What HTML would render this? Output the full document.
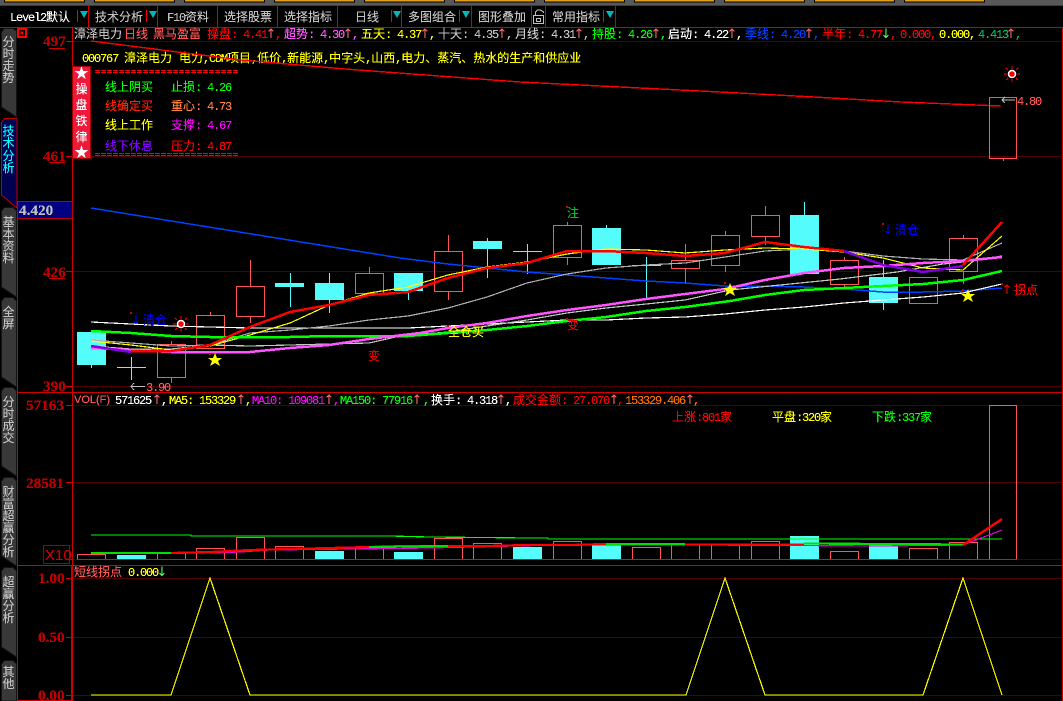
<!DOCTYPE html>
<html><head><meta charset="utf-8"><style>
html,body{margin:0;padding:0;background:#000;width:1063px;height:701px;overflow:hidden}
svg{display:block;position:absolute;left:0;top:0}
text{font-family:"WenQuanYi Zen Hei","Noto Sans CJK SC",sans-serif;font-size:12px;white-space:pre;filter:url(#sh)}
.n{font-family:"Liberation Mono",monospace;font-size:12px;letter-spacing:-1.2px}
.b{font-family:"Liberation Serif",serif;font-size:15.2px;font-weight:bold;fill:#c00000}
.a{font-family:"DejaVu Sans",sans-serif;font-size:13px;text-anchor:middle}
.t{fill:#c0c0c0;text-anchor:middle}
.l{fill:none;shape-rendering:crispEdges}
.c{fill:none;stroke:#ff5454;shape-rendering:crispEdges}
.f{fill:#54fcfc;shape-rendering:crispEdges}
.w{stroke:#54fcfc;shape-rendering:crispEdges}
.r{stroke:#ff5454;shape-rendering:crispEdges}
.g{stroke:#500000;shape-rendering:crispEdges}
.e{stroke:#d00000;shape-rendering:crispEdges;fill:none}
</style></head><body>
<svg width="1063" height="701" viewBox="0 0 1063 701" xmlns="http://www.w3.org/2000/svg">
<defs><filter id="sh" x="-20%" y="-30%" width="140%" height="160%" color-interpolation-filters="sRGB"><feComponentTransfer><feFuncA type="linear" slope="2.6" intercept="-0.35"/></feComponentTransfer></filter></defs>
<!-- top band -->
<rect x="0" y="0" width="1063" height="5" fill="#585858"/>
<g fill="#e0a010" stroke="#000" shape-rendering="crispEdges">
<rect x="4.5" y="-2" width="80" height="4"/><rect x="94.5" y="-2" width="80" height="4"/><rect x="184.5" y="-2" width="80" height="4"/><rect x="274.5" y="-2" width="80" height="4"/><rect x="364.5" y="-2" width="80" height="4"/><rect x="454.5" y="-2" width="80" height="4"/><rect x="544.5" y="-2" width="80" height="4"/><rect x="634.5" y="-2" width="80" height="4"/><rect x="724.5" y="-2" width="80" height="4"/><rect x="814.5" y="-2" width="80" height="4"/><rect x="904.5" y="-2" width="80" height="4"/></g>
<rect x="0" y="5" width="1063" height="22" fill="#000"/>
<path class="e" d="M0 5.5H1063M0 27.5H1063M88.5 6V27M157.5 6V27M217.5 6V27M277.5 6V27M337.5 6V27M401.5 6V27M471.5 6V27M531.5 6V27M545.5 6V27M615.5 6V27"/>
<path d="M77.5 10V22M146.5 10V22M391.5 10V22M459.5 10V22M603.5 10V22" stroke="#f00" shape-rendering="crispEdges"/>
<g fill="#00b8b8"><path d="M80 11H88L84 18Z"/><path d="M149 11H157L153 18Z"/><path d="M393 11H401L397 18Z"/><path d="M462 11H470L466 18Z"/><path d="M606 11H614L610 18Z"/></g>
<text x="10" y="21" fill="#fff"><tspan class="n">Level2</tspan>默认</text>
<text x="95" y="21" fill="#c0c0c0">技术分析</text>
<text x="167" y="21" fill="#c0c0c0"><tspan class="n">F10</tspan>资料</text>
<text x="224" y="21" fill="#c0c0c0">选择股票</text>
<text x="284" y="21" fill="#c0c0c0">选择指标</text>
<text x="355" y="21" fill="#c0c0c0">日线</text>
<text x="408" y="21" fill="#c0c0c0">多图组合</text>
<text x="478" y="21" fill="#c0c0c0">图形叠加</text>
<text x="552" y="21" fill="#c0c0c0">常用指标</text>
<g fill="none" stroke="#c0c0c0" shape-rendering="crispEdges"><rect x="533.5" y="15.5" width="10" height="8"/><path d="M535.5 15V12L537.5 10H540.5L543.5 12V13"/><rect x="536.5" y="18.5" width="4" height="3"/></g>

<!-- left tabs -->
<g fill="#383838" stroke="#141414" shape-rendering="crispEdges">
<path d="M1.5 32L4.5 28.5H13L16.5 31V117L1.5 107Z"/>
<path d="M1.5 211L4.5 207.5H13L16.5 211V297L1.5 287Z"/>
<path d="M1.5 301L4.5 297.5H13L16.5 301V387L1.5 377Z"/>
<path d="M1.5 391L4.5 387.5H13L16.5 391V476L1.5 466Z"/>
<path d="M1.5 481L4.5 477.5H13L16.5 481V566L1.5 556Z"/>
<path d="M1.5 571L4.5 567.5H13L16.5 571V657L1.5 647Z"/>
<path d="M1.5 664L4.5 660.5H13L16.5 664V701H1.5Z"/>
</g>
<path d="M1.5 122L4.5 118.5H17V208L1.5 195Z" fill="#000050" stroke="#c00000" shape-rendering="crispEdges"/>
<g>
<text class="t" x="8.5" y="46">分</text><text class="t" x="8.5" y="58">时</text><text class="t" x="8.5" y="70">走</text><text class="t" x="8.5" y="82">势</text>
<text x="8.5" y="135" text-anchor="middle" fill="#00ffff">技</text><text x="8.5" y="147" text-anchor="middle" fill="#00ffff">术</text><text x="8.5" y="160" text-anchor="middle" fill="#00ffff">分</text><text x="8.5" y="172" text-anchor="middle" fill="#00ffff">析</text>
<text class="t" x="8.5" y="226">基</text><text class="t" x="8.5" y="238">本</text><text class="t" x="8.5" y="250">资</text><text class="t" x="8.5" y="262">料</text>
<text class="t" x="8.5" y="316">全</text><text class="t" x="8.5" y="328">屏</text>
<text class="t" x="8.5" y="406">分</text><text class="t" x="8.5" y="418">时</text><text class="t" x="8.5" y="430">成</text><text class="t" x="8.5" y="442">交</text>
<text class="t" x="8.5" y="496">财</text><text class="t" x="8.5" y="508">富</text><text class="t" x="8.5" y="520">超</text><text class="t" x="8.5" y="532">赢</text><text class="t" x="8.5" y="544">分</text><text class="t" x="8.5" y="556">析</text>
<text class="t" x="8.5" y="586">超</text><text class="t" x="8.5" y="598">赢</text><text class="t" x="8.5" y="610">分</text><text class="t" x="8.5" y="622">析</text>
<text class="t" x="8.5" y="676">其</text><text class="t" x="8.5" y="688">他</text>
</g>

<!-- frame -->
<path class="g" d="M72 41.5H1062M72 156.5H1062M72 271.5H1062M72 386.5H1062M72 405.5H1062M72 482.5H1062M72 559.5H1062M72 578.5H1062M72 637.5H1062M72 695.5H1062"/>
<path class="e" d="M72.5 28V701M17.5 208V701M17 392.5H1062M17 565.5H1062M1062.5 28V701M17 700.5H72M71.5 566V701M66 41.5H72M66 156.5H72M66 271.5H72M66 386.5H72M66 405.5H72M66 482.5H72M66 559.5H72M66 578.5H72M66 637.5H72M66 695.5H72M49 48.5H65M49 162.5H65M49 278.5H65"/>
<rect x="18" y="29" width="8" height="8" fill="#000" stroke="#f00" stroke-width="2" shape-rendering="crispEdges"/><rect x="20.5" y="31.5" width="3" height="3" fill="#f00"/>

<!-- axis labels -->
<text class="b" x="43" y="46">497</text><text class="b" x="43" y="161">461</text><text class="b" x="43" y="277">426</text><text class="b" x="43" y="391">390</text>
<text class="b" x="26" y="410">57163</text><text class="b" x="26" y="488">28581</text>
<text class="b" x="38" y="583">1.00</text><text class="b" x="38" y="642">0.50</text><text class="b" x="38" y="700">0.00</text>
<rect x="17.5" y="201.5" width="55" height="17" fill="#000080" stroke="#c00000" shape-rendering="crispEdges"/>
<text class="b" x="19" y="215" style="fill:#c0c0c0">4.420</text>
<rect x="43.5" y="545.5" width="26" height="18" fill="none" stroke="#a00000" shape-rendering="crispEdges"/>
<text x="45" y="560" style="font-family:'Liberation Sans',sans-serif;font-size:15px;fill:#d00000">X10</text>

<!-- row 1 -->
<text x="74" y="38" fill="#c0c0c0">漳泽电力</text>
<text x="124" y="38" fill="#ff5454">日线</text>
<text x="153" y="38" fill="#ff5454">黑马盈富</text>
<g fill="#f00"><text x="207" y="38">操盘</text><text class="n" x="231" y="38">:</text><text class="n" x="243" y="38">4.41</text></g>
<g fill="#ff54ff"><text x="284" y="38">超势</text><text class="n" x="308" y="38">:</text><text class="n" x="320" y="38">4.30</text></g>
<g fill="#ffff00"><text x="361" y="38">五天</text><text class="n" x="385" y="38">:</text><text class="n" x="397" y="38">4.37</text></g>
<g fill="#c0c0c0"><text x="438" y="38">十天</text><text class="n" x="462" y="38">:</text><text class="n" x="474" y="38">4.35</text></g>
<g fill="#c8c8c8"><text x="515" y="38">月线</text><text class="n" x="539" y="38">:</text><text class="n" x="551" y="38">4.31</text></g>
<g fill="#00ff00"><text x="592" y="38">持股</text><text class="n" x="616" y="38">:</text><text class="n" x="628" y="38">4.26</text></g>
<g fill="#fff"><text x="668" y="38">启动</text><text class="n" x="692" y="38">:</text><text class="n" x="704" y="38">4.22</text></g>
<g fill="#0040ff"><text x="745" y="38">季线</text><text class="n" x="769" y="38">:</text><text class="n" x="781" y="38">4.20</text></g>
<g fill="#f00"><text x="822" y="38">半年</text><text class="n" x="846" y="38">:</text><text class="n" x="858" y="38">4.77</text></g>
<g fill="#ff6868">
<text class="a" x="271" y="38">↑</text><text class="a" x="348" y="38">↑</text><text class="a" x="425" y="38">↑</text><text class="a" x="502" y="38">↑</text><text class="a" x="579" y="38">↑</text><text class="a" x="656" y="38">↑</text><text class="a" x="732" y="38">↑</text><text class="a" x="809" y="38">↑</text><text class="a" x="1011" y="38">↑</text>
</g>
<text class="a" x="886" y="38" fill="#54ff54">↓</text>
<g>
<text class="n" x="275" y="38" fill="#f00">,</text><text class="n" x="352" y="38" fill="#ff54ff">,</text><text class="n" x="429" y="38" fill="#ff0">,</text><text class="n" x="506" y="38" fill="#c0c0c0">,</text><text class="n" x="583" y="38" fill="#c0c0c0">,</text><text class="n" x="660" y="38" fill="#0f0">,</text><text class="n" x="736" y="38" fill="#fff">,</text><text class="n" x="813" y="38" fill="#0040ff">,</text><text class="n" x="890" y="38" fill="#f00">,</text>
<text class="n" x="900" y="38" fill="#f00">0.000,</text><text class="n" x="939" y="38" fill="#ff0">0.000,</text><text class="n" x="978" y="38" fill="#00c060">4.413</text><text class="n" x="1015" y="38" fill="#00c060">,</text>
</g>
<!-- row 2 -->
<g fill="#ffff00"><text class="n" x="82" y="62">000767</text><text x="124" y="62">漳泽电力</text>
<text x="179" y="62">电力<tspan class="n">,CDM</tspan>项目<tspan class="n">,</tspan>低价<tspan class="n">,</tspan>新能源<tspan class="n">,</tspan>中字头<tspan class="n">,</tspan>山西<tspan class="n">,</tspan>电力、蒸汽、热水的生产和供应业</text></g>

<!-- top red curve -->
<polyline class="l" stroke="#f00" stroke-width="1.4" points="91,41 241,60 345,69 520,82 720,92 814,97 901,102 1001,106"/>

<!-- legend -->
<rect x="72.5" y="66.5" width="18" height="92" fill="#f01838" stroke="#a00000" shape-rendering="crispEdges"/>
<g fill="#fff" text-anchor="middle"><text x="81.5" y="78" style="font-size:14px">★</text><text x="81.5" y="93">操</text><text x="81.5" y="109">盘</text><text x="81.5" y="125">铁</text><text x="81.5" y="141">律</text><text x="81.5" y="157" style="font-size:14px">★</text></g>
<path d="M95 70.5H238M95 72.5H238M95 153.5H238M95 155.5H238" stroke="#f00" stroke-dasharray="5 1" shape-rendering="crispEdges"/>
<text x="105" y="91" fill="#00ff00">线上阴买</text><text x="171" y="91" fill="#00ff00">止损<tspan class="n">: 4.26</tspan></text>
<text x="105" y="110" fill="#ff2000">线确定买</text><text x="171" y="110" fill="#ff8040">重心<tspan class="n">: 4.73</tspan></text>
<text x="105" y="129" fill="#ffff00">线上工作</text><text x="171" y="129" fill="#ff00ff">支撑<tspan class="n">: 4.67</tspan></text>
<text x="105" y="150" fill="#8000ff">线下休息</text><text x="171" y="150" fill="#ff0000">压力<tspan class="n">: 4.87</tspan></text>

<!-- candles -->
<g>
<path class="w" d="M91.5 365V368M131.5 357V380M117 367.5H146M290.5 273V307M275 285H304M329.5 273V283M329.5 300V313M408.5 290V300M487.5 238V278M527.5 244V274M513 251.5H542M606.5 225V228M646.5 257V298M632 265.5H661M804.5 202V215M883.5 260V277M883.5 303V310"/>
<rect class="f" x="77" y="332" width="29" height="33"/><rect class="f" x="275" y="283" width="29" height="4"/><rect class="f" x="315" y="283" width="29" height="17"/><rect class="f" x="394" y="273" width="29" height="18"/><rect class="f" x="473" y="241" width="29" height="8"/><rect class="f" x="592" y="228" width="29" height="37"/><rect class="f" x="790" y="215" width="29" height="59"/><rect class="f" x="869" y="277" width="29" height="26"/>
<path class="r" d="M171.5 341V344M171.5 377V383M210.5 312V315M250.5 260V286M250.5 316V323M369.5 267V273M448.5 235V251M448.5 291V300M567.5 222V225M567.5 258V265M685.5 244V260M685.5 268V283M725.5 231V235M725.5 265V272M765.5 206V215M765.5 236V245M844.5 257V260M844.5 284V287M963.5 235V238M963.5 271V284M1003.5 158V161"/>
<g class="c"><rect x="157.5" y="344.5" width="28" height="33"/><rect x="196.5" y="315.5" width="28" height="33"/><rect x="236.5" y="286.5" width="28" height="30"/><rect x="355.5" y="273.5" width="28" height="20"/><rect x="434.5" y="251.5" width="28" height="40"/><rect x="553.5" y="225.5" width="28" height="32"/><rect x="671.5" y="260.5" width="28" height="8"/><rect x="711.5" y="235.5" width="28" height="30"/><rect x="751.5" y="215.5" width="28" height="21"/><rect x="830.5" y="260.5" width="28" height="24"/><rect x="909.5" y="277.5" width="28" height="26"/><rect x="949.5" y="238.5" width="28" height="33"/><rect x="989.5" y="97.5" width="27" height="61"/></g>
</g>

<!-- MA lines -->
<polyline class="l" stroke="#0040ff" stroke-width="1.5" points="91,208 400,258 448,264 487,268 527,272 567,275 606,278 646,281 685,283 725,286 765,286 804,287 844,289 883,292 923,292 963,291 1002,288"/>
<polyline class="l" stroke="#fff" stroke-width="1.2" points="91,322 131,324 171,326 210,327 250,328 329,328 408,328 448,326 487,324 527,322 567,320 606,320 646,318 685,317 725,314 765,310 804,307 844,303 883,300 923,297 963,293 1002,284"/>
<polyline class="l" stroke="#c0c8c0" stroke-width="1.2" points="91,346 131,349 171,349 210,345 250,346 290,345 329,344 369,343 400,336 448,332 487,326 527,320 567,313 606,308 646,304 685,300 730,290 790,284 840,279 897,272 943,264 963,262 1002,256"/>
<polyline class="l" stroke="#b0b0b0" stroke-width="1.2" points="91,340 131,343 171,346 210,345 250,333 290,330 329,326 369,320 408,316 448,308 487,297 527,283 567,274 606,268 646,265 685,263 725,257 765,251 804,249 844,251 883,256 923,259 963,260 1002,243"/>
<polyline class="l" stroke="#ffff00" stroke-width="1.2" points="91,341 131,345 171,350 210,346 250,335 290,323 329,305 369,293 408,287 448,275 487,267 527,262 567,254 606,249 646,250 685,253 725,250 765,248 804,249 844,252 883,258 923,268 963,270 1002,236"/>
<polyline class="l" stroke="#00ff00" stroke-width="2.5" points="91,331 131,333 171,336 210,337 250,337 290,337 329,336 369,336 408,336 448,333 487,330 527,326 567,321 606,317 646,311 685,307 730,301 765,295 804,290 844,288 883,286 923,284 963,280 1002,271"/>
<polyline class="l" stroke="#ff54ff" stroke-width="2.5" points="91,348 131,350 171,352 210,352 250,352 290,348 329,345 369,339 420,333 448,328 487,323 527,316 567,310 606,305 646,299 685,294 725,289 765,280 804,273 844,268 883,266 923,263 963,261 1002,257"/>
<polyline class="l" stroke="#8000e0" stroke-width="2.5" points="91,346 131,352"/>
<polyline class="l" stroke="#f00" stroke-width="2.5" points="131,351 171,351 210,345 250,327 290,312 329,305 369,295 408,292 448,278 487,268 527,263 567,251 606,251 646,253 685,256 725,253 765,242 804,247 844,251"/>
<polyline class="l" stroke="#8000e0" stroke-width="2.5" points="844,251 883,265 923,272 963,266"/>
<polyline class="l" stroke="#f00" stroke-width="2.5" points="963,265 1002,222"/>

<!-- annotations -->
<g fill="#d00000" shape-rendering="crispEdges"><rect x="130" y="312" width="2" height="2"/><rect x="209" y="353" width="2" height="2"/><rect x="447" y="325" width="2" height="2"/><rect x="566" y="318" width="2" height="2"/><rect x="566" y="206" width="2" height="2"/><rect x="724" y="282" width="2" height="2"/><rect x="882" y="223" width="2" height="2"/><rect x="962" y="289" width="2" height="2"/><rect x="1001" y="283" width="2" height="2"/></g>
<text class="a" x="136" y="324" fill="#0000ff">↓</text><text x="143" y="324" fill="#0000ff">清仓</text>
<text class="a" x="888" y="234" fill="#0000ff">↓</text><text x="895" y="234" fill="#0000ff">清仓</text>
<text class="a" x="1007" y="294" fill="#f00">↑</text><text x="1014" y="294" fill="#f00">拐点</text>
<text x="368" y="360" fill="#e00000">变</text><text x="567" y="329" fill="#e00000">变</text><text x="567" y="217" fill="#00c030">注</text><text x="448" y="336" fill="#ffff00">全仓买</text>
<g fill="#ffff00"><polygon points="215,353 217,358 222,358 218,361 220,366 215,363 210,366 212,361 208,358 213,358"/><polygon points="730,283 732,288 737,288 733,291 735,296 730,293 725,296 727,291 723,288 728,288"/><polygon points="968,289 970,294 975,294 971,297 973,302 968,299 963,302 965,297 961,294 966,294"/></g>
<g stroke="#f00" shape-rendering="crispEdges">
<path d="M181 316V319M181 329V332M173 324H176M186 324H189M175 318L177 320M187 318L185 320M175 330L177 328M187 330L185 328"/>
<path d="M1012 66V69M1012 79V82M1004 74H1007M1017 74H1020M1006 68L1008 70M1018 68L1016 70M1006 80L1008 78M1018 80L1016 78"/></g>
<circle cx="181" cy="324" r="3.5" fill="#f00" stroke="#fff" stroke-width="1.5"/><circle cx="1012" cy="74" r="3.5" fill="#f00" stroke="#fff" stroke-width="1.5"/>
<path d="M134 383L131 386.5L134 390M131 386.5H145" stroke="#c0c0c0" fill="none" shape-rendering="crispEdges"/>
<text class="n" x="146" y="391" fill="#ff5454">3.90</text>
<path d="M1005 97L1002 100L1005 103M1002 100H1015" stroke="#c0c0c0" fill="none" shape-rendering="crispEdges"/>
<text class="n" x="1017" y="105" fill="#ff5454">4.80</text>

<!-- VOL header -->
<text x="74" y="403" fill="#ff5454" style="font-family:'Liberation Sans';font-size:11px">VOL(F)</text>
<text class="n" x="115" y="404" fill="#fff">571625</text>
<text class="n" x="169" y="404" fill="#ff0">MA5: 153329</text>
<text class="n" x="252" y="404" fill="#f0f">MA10: 109081</text>
<text class="n" x="340" y="404" fill="#0f0">MA150: 77916</text>
<text x="431" y="404" fill="#fff">换手<tspan class="n">: 4.318</tspan></text>
<text x="513" y="404" fill="#f00">成交金额<tspan class="n">: 27.070</tspan></text>
<text class="n" x="625" y="404" fill="#ff7000">153329.406</text>
<g fill="#ff6868"><text class="a" x="157" y="404">↑</text><text class="a" x="241" y="404">↑</text><text class="a" x="329" y="404">↑</text><text class="a" x="417" y="404">↑</text><text class="a" x="501" y="404">↑</text><text class="a" x="614" y="404">↑</text><text class="a" x="690" y="404">↑</text></g>
<text class="n" x="161" y="404" fill="#fff">,</text><text class="n" x="245" y="404" fill="#ff0">,</text><text class="n" x="333" y="404" fill="#f0f">,</text><text class="n" x="423" y="404" fill="#0f0">,</text><text class="n" x="505" y="404" fill="#fff">,</text><text class="n" x="617" y="404" fill="#f00">,</text><text class="n" x="693" y="404" fill="#ff7000">,</text>
<text x="672" y="421" fill="#f00">上涨<tspan class="n">:801</tspan>家</text>
<text x="772" y="421" fill="#ff0">平盘<tspan class="n">:320</tspan>家</text>
<text x="872" y="421" fill="#0f0">下跌<tspan class="n">:337</tspan>家</text>

<!-- VOL bars -->
<g class="c"><rect x="77.5" y="554.5" width="28" height="5"/><rect x="157.5" y="552.5" width="28" height="7"/><rect x="196.5" y="548.5" width="28" height="11"/><rect x="236.5" y="537.5" width="28" height="22"/><rect x="275.5" y="546.5" width="28" height="13"/><rect x="355.5" y="547.5" width="28" height="12"/><rect x="434.5" y="538.5" width="28" height="21"/><rect x="473.5" y="543.5" width="28" height="16"/><rect x="553.5" y="541.5" width="28" height="18"/><rect x="632.5" y="547.5" width="28" height="12"/><rect x="671.5" y="544.5" width="28" height="15"/><rect x="711.5" y="544.5" width="28" height="15"/><rect x="751.5" y="541.5" width="28" height="18"/><rect x="830.5" y="551.5" width="28" height="8"/><rect x="909.5" y="548.5" width="28" height="11"/><rect x="949.5" y="542.5" width="28" height="17"/><rect x="989.5" y="405.5" width="27" height="154"/></g>
<rect class="f" x="117" y="555" width="29" height="4"/><rect class="f" x="315" y="551" width="29" height="8"/><rect class="f" x="394" y="552" width="29" height="7"/><rect class="f" x="513" y="547" width="29" height="12"/><rect class="f" x="592" y="544" width="29" height="15"/><rect class="f" x="790" y="536" width="29" height="23"/><rect class="f" x="869" y="545" width="29" height="14"/>
<path d="M77 559.5H1017" stroke="#f00" shape-rendering="crispEdges"/>
<polyline class="l" stroke="#00ff00" stroke-width="1.2" points="91,535 191,535 191,536 390,536 430,537 530,538 548,538 548,539 1002,539"/>
<polyline class="l" stroke="#e000e0" stroke-width="1.2" points="210,553 240,552 270,550 350,549 430,548 470,547 560,545 700,545 880,546 963,545 1002,530"/>
<polyline class="l" stroke="#f00" stroke-width="2.2" points="171,553 210,552 250,550 290,549 329,548 369,547 408,546 448,546 487,546 527,545 570,545 606,544"/>
<polyline class="l" stroke="#00e000" stroke-width="2.2" points="91,553 171,553"/>
<polyline class="l" stroke="#00e000" stroke-width="2.2" points="369,547 448,546"/>
<polyline class="l" stroke="#00e000" stroke-width="2.2" points="606,544 685,544"/>
<polyline class="l" stroke="#f00" stroke-width="2.2" points="685,544.5 804,544.5"/>
<polyline class="l" stroke="#00e000" stroke-width="2.2" points="804,543.5 884,544 965,544.5"/>
<polyline class="l" stroke="#f00" stroke-width="2.5" points="963,545 1002,519"/>

<!-- bottom panel -->
<text x="74" y="576" fill="#ff5454">短线拐点</text><text class="n" x="128" y="576" fill="#ff0">0.000</text><text class="a" x="162" y="576" fill="#54ff54">↓</text>
<polyline class="l" stroke="#ffff00" stroke-width="1.2" points="91,695 171,695 210,578 250,695 686,695 725,578 765,695 923,695 963,578 1002,695"/>
</svg>
</body></html>
